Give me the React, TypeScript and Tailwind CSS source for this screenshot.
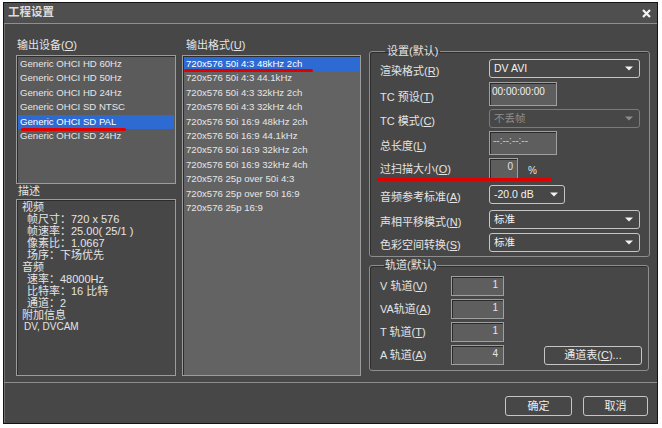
import clsx from 'clsx';
import type { ReactNode } from 'react';

const DEVICES = [
  'Generic OHCI HD 60Hz',
  'Generic OHCI HD 50Hz',
  'Generic OHCI HD 24Hz',
  'Generic OHCI SD NTSC',
  'Generic OHCI SD PAL',
  'Generic OHCI SD 24Hz',
];

const FORMATS = [
  '720x576 50i 4:3 48kHz 2ch',
  '720x576 50i 4:3 44.1kHz',
  '720x576 50i 4:3 32kHz 2ch',
  '720x576 50i 4:3 32kHz 4ch',
  '720x576 50i 16:9 48kHz 2ch',
  '720x576 50i 16:9 44.1kHz',
  '720x576 50i 16:9 32kHz 2ch',
  '720x576 50i 16:9 32kHz 4ch',
  '720x576 25p over 50i 4:3',
  '720x576 25p over 50i 16:9',
  '720x576 25p 16:9',
];

function Key({ k }: { k: string }) {
  return <span className="underline underline-offset-[1px]">{k}</span>;
}

function Label({ text, k }: { text: string; k: string }) {
  return (
    <>
      {text}(<Key k={k} />)
    </>
  );
}

function Caret() {
  return (
    <svg width="8" height="5" viewBox="0 0 8 5" className="shrink-0">
      <path d="M0 0.5h8L4 4.5z" fill="currentColor" />
    </svg>
  );
}

function Select({ value, width, disabled }: { value: string; width: string; disabled?: boolean }) {
  return (
    <div
      className={clsx(
        'flex h-[19px] items-center justify-between rounded-[3px] border pl-[4px] pr-[6px] text-[10.5px]',
        disabled ? 'border-[#7a7a7a] text-[#8c8c8c]' : 'border-[#c6c6c6] text-[#f2f2f2]',
        width,
      )}
    >
      <span>{value}</span>
      <Caret />
    </div>
  );
}

function Sunken({ className, children }: { className?: string; children?: ReactNode }) {
  return (
    <div className={clsx('border border-[#a0a0a0] bg-[#5e5e5e] shadow-[inset_1px_1px_0_#2a2a2a]', className)}>
      {children}
    </div>
  );
}

function ListBox({ items, selected, className, mark }: { items: string[]; selected: number; className: string; mark: string }) {
  return (
    <div className={clsx('relative border border-[#9c9c9c] pt-[1px] shadow-[inset_1px_1px_0_#2c2c2c]', className)}>
      {items.map((it, i) => (
        <div
          key={it}
          className={clsx(
            'mx-[1px] h-[14.4px] whitespace-nowrap pl-[2px] text-[9.6px] leading-[14.4px]',
            i === selected ? 'bg-[#2d6bd3] text-white' : 'text-[#e6e6e6]',
          )}
        >
          {it}
        </div>
      ))}
      <div className={clsx('absolute h-[2.5px] rounded-full bg-[#e00000]', mark)} />
    </div>
  );
}

function Row({ label, children, className }: { label: ReactNode; children: ReactNode; className?: string }) {
  return (
    <div className={clsx('flex items-center', className)}>
      <div className="mt-[6px] w-[109px] shrink-0 text-[11px] leading-[13px]">{label}</div>
      {children}
    </div>
  );
}

function TrackRow({ label, value, children, className }: { label: ReactNode; value: string; children?: ReactNode; className?: string }) {
  return (
    <div className={clsx('flex h-[20px] items-center', className)}>
      <div className="w-[71px] shrink-0 text-[11px] leading-[13px]">{label}</div>
      <Sunken className="h-[20px] w-[53px] pr-[5px] pt-[2px] text-right text-[10px] leading-[12px]">{value}</Sunken>
      {children}
    </div>
  );
}

const DESC: [string, number][] = [
  ['视频', 0],
  ['帧尺寸：720 x 576', 1],
  ['帧速率：25.00( 25/1 )', 1],
  ['像素比：1.0667', 1],
  ['场序：下场优先', 1],
  ['音频', 0],
  ['速率：48000Hz', 1],
  ['比特率：16 比特', 1],
  ['通道：2', 1],
  ['附加信息', 0],
  ['DV, DVCAM', 2],
];

export default function App() {
  return (
    <div className="h-[428px] w-[662px] bg-white pl-[3px] pt-[2px] font-['Liberation_Sans','Noto_Sans_CJK_SC',sans-serif] text-[#e4e4e4]">
      <div className="flex h-[422px] w-[655px] flex-col border border-[#141414] bg-[#474747] shadow-[inset_1px_0_0_#6e6e6e]">
        {/* title */}
        <div className="flex h-[20px] items-center justify-between bg-[#4f4f4f] pl-[4px] pr-[6px]">
          <span className="text-[11.5px] font-bold text-[#dcdcdc]">工程设置</span>
          <svg width="9" height="9" viewBox="0 0 9 9">
            <path d="M1 1L8 8M8 1L1 8" stroke="#f4f4f4" strokeWidth="2.2" />
          </svg>
        </div>
        <div className="h-px bg-[#8f8f8f]" />

        {/* body */}
        <div className="flex h-[358px] pl-[12px]">
          {/* devices */}
          <div className="flex w-[160px] flex-col pt-[14px]">
            <div className="h-[15px] pl-[1px] text-[11px] leading-[15px]">
              <Label text="输出设备" k="O" />
            </div>
            <ListBox items={DEVICES} selected={4} className="mt-[2px] h-[129px] bg-[#5b5b5b]" mark="left-[4px] top-[72px] w-[105px]" />
            <div className="h-[15px] pl-[2px] text-[11px] leading-[15px]">描述</div>
            <div className="h-[177px] border border-[#9c9c9c] pl-[5px] pt-[1px] text-[11px] leading-[12px] shadow-[inset_1px_1px_0_#2c2c2c]">
              {DESC.map(([t, lv]) => (
                <div key={t} className={clsx('whitespace-nowrap', lv === 1 && 'pl-[5px]', lv === 2 && 'pl-[2px] text-[10px]')}>
                  {t}
                </div>
              ))}
            </div>
          </div>

          {/* formats */}
          <div className="ml-[6px] flex w-[179px] flex-col pt-[14px]">
            <div className="h-[15px] pl-[4px] text-[11px] leading-[15px]">
              <Label text="输出格式" k="U" />
            </div>
            <ListBox items={FORMATS} selected={0} className="mt-[2px] h-[321px] bg-[#636363]" mark="left-[1px] top-[13px] w-[129px]" />
          </div>

          {/* settings */}
          <div className="ml-[8px] flex w-[281px] flex-col pt-[21px]">
            <fieldset className="rounded-[3px] border border-[#8e8e8e] pb-[4px] pl-[10px] pr-[9px] shadow-[inset_1px_1px_0_#2e2e2e]">
              <legend className="ml-[5px] px-[2px] text-[11px] leading-[13px]">设置(默认)</legend>
              <Row label={<Label text="渲染格式" k="R" />} className="mt-[1px]">
                <Select value="DV AVI" width="w-[151px]" />
              </Row>
              <Row label={<Label text="TC 预设" k="T" />} className="mt-[4px]">
                <Sunken className="h-[24px] w-[68px] pl-[2px] pt-[3px] text-[10px] leading-[12px] text-[#f0f0f0]">00:00:00:00</Sunken>
              </Row>
              <Row label={<Label text="TC 模式" k="C" />} className="mt-[3px]">
                <Select value="不丢帧" width="w-[151px]" disabled />
              </Row>
              <Row label={<Label text="总长度" k="L" />} className="mt-[3px]">
                <Sunken className="h-[24px] w-[68px] pl-[3px] pt-[3px] text-[10px] leading-[12px] text-[#c8c8c8]">--:--:--:--</Sunken>
              </Row>
              <div className="relative mt-[3px] flex items-center">
                <div className="w-[109px] shrink-0 text-[11px] leading-[13px]">
                  <Label text="过扫描大小" k="O" />
                </div>
                <Sunken className="h-[22px] w-[29px] pr-[4px] pt-[2px] text-right text-[10px] leading-[12px]">0</Sunken>
                <span className="ml-[10px] mt-[2px] text-[10px]">%</span>
                <div className="absolute left-[-3px] top-[20px] h-[2.5px] w-[175px] rounded-full bg-[#e00000]" />
              </div>
              <Row label={<Label text="音频参考标准" k="A" />} className="mt-[5px]">
                <Select value="-20.0 dB" width="w-[76px]" />
              </Row>
              <Row label={<Label text="声相平移模式" k="N" />} className="mt-[6px]">
                <Select value="标准" width="w-[151px]" />
              </Row>
              <Row label={<Label text="色彩空间转换" k="S" />} className="mt-[4px]">
                <Select value="标准" width="w-[151px]" />
              </Row>
            </fieldset>

            <fieldset className="mt-[2px] w-[280px] rounded-[3px] border border-[#8e8e8e] pb-[5px] pl-[10px] shadow-[inset_1px_1px_0_#2e2e2e]">
              <legend className="ml-[4px] px-[1px] text-[11px] leading-[13px]">轨道(默认)</legend>
              <TrackRow label={<Label text="V 轨道" k="V" />} value="1" className="mt-[4px]" />
              <TrackRow label={<Label text="VA轨道" k="A" />} value="1" className="mt-[3px]" />
              <TrackRow label={<Label text="T 轨道" k="T" />} value="1" className="mt-[3px]" />
              <TrackRow label={<Label text="A 轨道" k="A" />} value="4" className="mt-[3px]">
                <button className="ml-[40px] h-[19px] w-[98px] rounded-[3px] border border-[#c6c6c6] text-[11px] leading-[13px] text-[#ececec]">
                  通道表(<Key k="C" />)...
                </button>
              </TrackRow>
            </fieldset>
          </div>
        </div>

        <div className="h-px bg-[#8c8c8c]" />

        {/* footer */}
        <div className="flex justify-end gap-[11px] pr-[9px] pt-[13px]">
          <button className="h-[20px] w-[67px] rounded-[3px] border border-[#c6c6c6] text-[11px] text-[#ececec]">确定</button>
          <button className="h-[20px] w-[65px] rounded-[3px] border border-[#c6c6c6] text-[11px] text-[#ececec]">取消</button>
        </div>
      </div>
    </div>
  );
}
